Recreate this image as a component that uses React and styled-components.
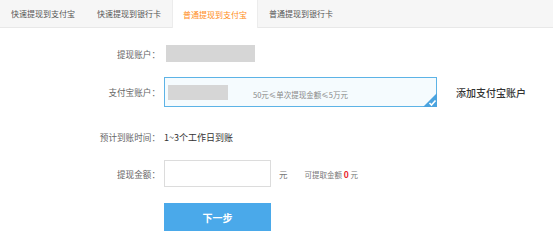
import React from "react"
import styled, { createGlobalStyle } from "styled-components"

const tabs = ["快速提现到支付宝", "快速提现到银行卡", "普通提现到支付宝", "普通提现到银行卡"]

const App = () => {
  return (
    <>
      <GlobalStyle />
      <Page>
        <TabBar>
          {tabs.map((t, i) => (
            <Tab key={t} active={i === 2}>
              {t}
            </Tab>
          ))}
        </TabBar>
        <Form>
          <Row top={17}>
            <Label>提现账户：</Label>
            <GrayBlock w={89} h={17} style={{ marginLeft: 2 }} />
          </Row>
          <Row top={15}>
            <Label>支付宝账户：</Label>
            <AccountBox>
              <GrayBlock w={60} h={15} />
              <Hint>50元≤单次提现金额≤5万元</Hint>
              <Check>
                <svg width="14" height="14" viewBox="0 0 14 14">
                  <path d="M14 0 L14 14 L0 14 Z" fill="#4aa3df" />
                  <path d="M6.5 10 L8.5 12 L12.5 7.5" stroke="#fff" strokeWidth="1.6" fill="none" />
                </svg>
              </Check>
            </AccountBox>
            <AddLink>添加支付宝账户</AddLink>
          </Row>
          <Row top={22} h={16}>
            <Label>预计到账时间：</Label>
            <Value>1~3个工作日到账</Value>
          </Row>
          <Row top={15}>
            <Label>提现金额：</Label>
            <AmountInput />
            <Unit>元</Unit>
            <Available>
              可提取金额 <Red>0</Red> 元
            </Available>
          </Row>
          <Row top={16}>
            <Label />
            <NextButton>下一步</NextButton>
          </Row>
        </Form>
      </Page>
    </>
  )
}

export default App

const GlobalStyle = createGlobalStyle`
  body {
    margin: 0;
    background: #fff;
    font-family: "Noto Sans CJK SC", "Liberation Sans", sans-serif;
  }
`

const Page = styled.div`
  width: 553px;
  height: 246px;
  overflow: hidden;
`

const TabBar = styled.div`
  display: flex;
  height: 27px;
  background: #f6f6f6;
  border-bottom: 1px solid #e8e8e8;
`

const Tab = styled.div`
  display: flex;
  align-items: center;
  justify-content: center;
  height: ${({ active }) => (active ? "28px" : "27px")};
  padding: 0 10px;
  font-size: 8px;
  color: ${({ active }) => (active ? "#ff8c1a" : "#555")};
  background: ${({ active }) => (active ? "#fff" : "transparent")};
  border-left: 1px solid ${({ active }) => (active ? "#ececec" : "transparent")};
  border-right: 1px solid ${({ active }) => (active ? "#ececec" : "transparent")};
  &:first-child {
    padding-left: 10px;
  }
`

const Form = styled.div`
  display: flex;
  flex-direction: column;
`

const Row = styled.div`
  display: flex;
  align-items: center;
  margin-top: ${({ top }) => top}px;
  height: ${({ h }) => (h ? `${h}px` : "auto")};
`

const Label = styled.div`
  width: 164px;
  flex-shrink: 0;
  text-align: right;
  padding-right: 4px;
  box-sizing: border-box;
  font-size: 8.6px;
  color: #666;
`

const GrayBlock = styled.div`
  width: ${({ w }) => w}px;
  height: ${({ h }) => h}px;
  background: #d6d6d6;
  flex-shrink: 0;
`

const AccountBox = styled.div`
  position: relative;
  display: flex;
  align-items: center;
  width: 273px;
  height: 30px;
  box-sizing: border-box;
  padding-left: 3px;
  border: 1px solid #5db3e6;
  background: #f5fbfe;
`

const Hint = styled.div`
  flex: 1;
  text-align: center;
  margin-left: -63px;
  font-size: 7.5px;
  color: #888;
  margin-top: 4px;
`

const Check = styled.div`
  position: absolute;
  right: -1px;
  bottom: -1px;
  width: 14px;
  height: 14px;
  line-height: 0;
`

const AddLink = styled.div`
  margin-left: 19px;
  font-size: 10px;
  color: #333;
  font-weight: 500;
`

const Value = styled.div`
  font-size: 9px;
  color: #333;
`

const AmountInput = styled.div`
  width: 107px;
  height: 27px;
  box-sizing: border-box;
  border: 1px solid #dcdcdc;
  background: #fff;
`

const Unit = styled.div`
  margin-left: 8px;
  font-size: 8.5px;
  color: #777;
`

const Available = styled.div`
  margin-left: 17px;
  font-size: 7.5px;
  color: #777;
`

const Red = styled.span`
  color: #e8262b;
  font-weight: bold;
  font-size: 8.5px;
`

const NextButton = styled.div`
  width: 107px;
  height: 28px;
  display: flex;
  align-items: center;
  justify-content: center;
  background: #4aa9ea;
  color: #fff;
  font-size: 10px;
  font-weight: bold;
`
